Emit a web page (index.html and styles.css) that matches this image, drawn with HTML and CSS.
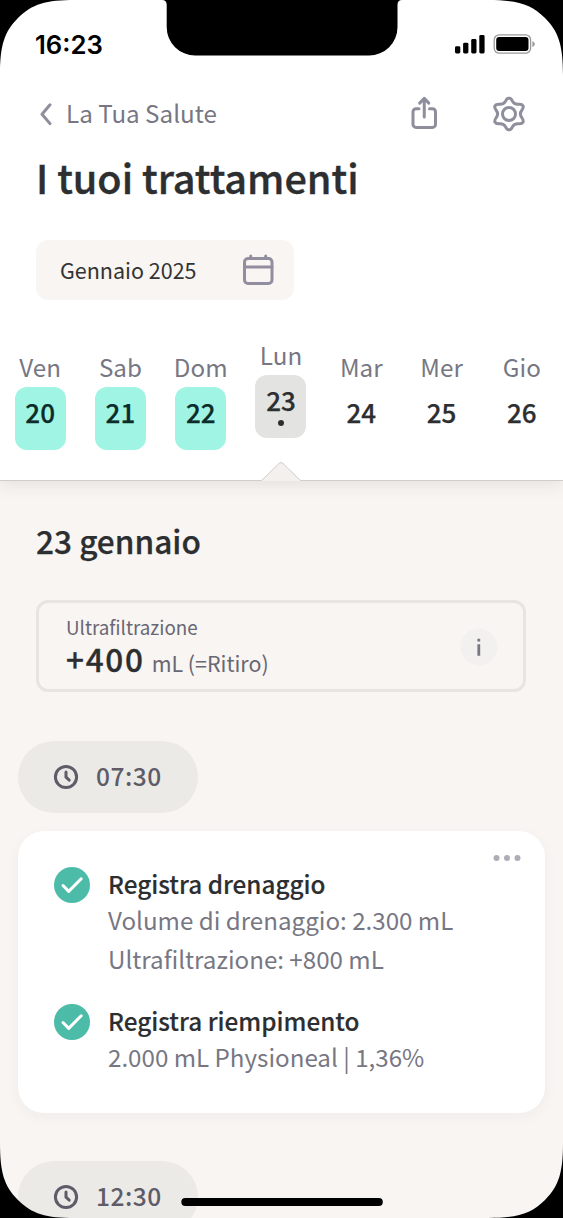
FILE: index.html
```html
<!DOCTYPE html>
<html lang="it">
<head>
<meta charset="utf-8">
<title>I tuoi trattamenti</title>
<link rel="stylesheet" href="styles.css">
</head>
<body>
<div class="phone">
  <header class="top">
    <div class="status">
      <span class="clock">16:23</span>
      <svg class="status-icons" width="82" height="22" viewBox="454 33 82 22">
        <rect x="455" y="46.2" width="5.3" height="7.3" rx="1.4"/>
        <rect x="463.1" y="42.8" width="5.3" height="10.7" rx="1.4"/>
        <rect x="471.2" y="39" width="5.3" height="14.5" rx="1.4"/>
        <rect x="479.3" y="35" width="5.3" height="18.5" rx="1.4"/>
        <rect x="494.2" y="34.8" width="36.4" height="18.4" rx="5" fill="none" stroke="#999" stroke-width="1.3"/>
        <rect x="496.2" y="36.9" width="32.3" height="14.2" rx="3"/>
        <path d="M532.4 41.2c3.2 1 3.2 4.700 0 5.700z" fill="#999"/>
      </svg>
    </div>
    <nav class="nav">
      <svg class="back" width="14" height="24" viewBox="0 0 14 24"><path d="M12 2.800 4 12.200l8 9.400"/></svg>
      <span class="nav-label">La Tua Salute</span>
      <svg class="share" width="28" height="36" viewBox="0 0 28 36"><path d="M8 12.700H5a3 3 0 0 0-3 3v12.700a3 3 0 0 0 3 3h16.500a3 3 0 0 0 3-3V15.700a3 3 0 0 0-3-3h-3M13.250 21V3M8.700 7.100l4.550-4.800 4.550 4.800"/></svg>
      <svg class="gear" width="38" height="38" viewBox="-19 -19 38 38">
        <path d="M-3.400-12.900C-1.700-16.500-.8-15.700 0-15.700S1.700-16.500 3.400-12.900C4.800-10.200 6.200-9.500 9.400-9.700 13.200-10 13.500-9.100 14-8.200S14.800-6.500 12.700-3.500C10.900-1.100 10.900 1.100 12.700 3.500 14.800 6.500 14.500 7.300 14 8.200S13.200 10 9.400 9.700C6.200 9.500 4.800 10.200 3.400 12.900 1.700 16.500.8 15.700 0 15.700S-1.700 16.500-3.400 12.900C-4.800 10.200-6.200 9.500-9.400 9.700-13.200 10-13.500 9.100-14 8.200S-14.800 6.500-12.700 3.500C-10.900 1.100-10.900-1.100-12.700-3.500-14.800-6.500-14.500-7.300-14-8.200S-13.200-10-9.400-9.700C-6.200-9.500-4.800-10.200-3.400-12.900Z"/>
        <circle r="6.500"/>
      </svg>
    </nav>
    <h1 class="title">I tuoi trattamenti</h1>
    <button class="month">
      <span>Gennaio 2025</span>
      <svg width="32" height="32" viewBox="0 0 32 32"><rect x="2.500" y="4.500" width="27.500" height="25" rx="3.500"/><path d="M2.500 13h27.500M8.700 2v2.500M23.700 2v2.500"/></svg>
    </button>
    <div class="days">
      <div class="day done"><span class="name">Ven</span><span class="num">20</span></div>
      <div class="day done"><span class="name">Sab</span><span class="num">21</span></div>
      <div class="day done"><span class="name">Dom</span><span class="num">22</span></div>
      <div class="day current"><span class="name">Lun</span><span class="num">23<i class="dot"></i></span></div>
      <div class="day"><span class="name">Mar</span><span class="num">24</span></div>
      <div class="day"><span class="name">Mer</span><span class="num">25</span></div>
      <div class="day"><span class="name">Gio</span><span class="num">26</span></div>
    </div>
    <svg class="pointer" width="42" height="20" viewBox="0 0 42 20"><path class="fill" d="M1.500 19.500 19 2.500q2-2 4 0L40.500 19.500V20h-39z"/><path class="edge" d="M1.500 19.500 19 2.500q2-2 4 0L40.500 19.500"/></svg>
  </header>
  <main class="content">
    <h2 class="date">23 gennaio</h2>
    <section class="summary">
      <div>
        <div class="summary-label">Ultrafiltrazione</div>
        <div class="summary-value"><strong>+400</strong><span>mL (=Ritiro)</span></div>
      </div>
      <svg class="info" width="38" height="38" viewBox="0 0 38 38"><circle cx="19" cy="19" r="18.500"/><path d="M17.400 10.800h2.800v2.800h-2.800zM17.400 16.200h2.800v11.600h-2.800z"/></svg>
    </section>
    <div class="time">
      <svg width="26" height="26" viewBox="0 0 26 26"><circle cx="13" cy="13" r="10.600"/><path d="M13 7.900v5.200l3.200 3"/></svg><span>07:30</span>
    </div>
    <section class="card">
      <svg class="more" width="28" height="8" viewBox="0 0 28 8"><circle cx="3.500" cy="4" r="3"/><circle cx="14" cy="4" r="3"/><circle cx="24.500" cy="4" r="3"/></svg>
      <article class="item">
        <svg class="check" width="36" height="36" viewBox="0 0 36 36"><circle cx="18" cy="18" r="18"/><path d="m9 18.500 5.700 5.900 12.500-12.600"/></svg>
        <div><h3>Registra drenaggio</h3><p>Volume di drenaggio: 2.300 mL</p><p>Ultrafiltrazione: +800 mL</p></div>
      </article>
      <article class="item">
        <svg class="check" width="36" height="36" viewBox="0 0 36 36"><circle cx="18" cy="18" r="18"/><path d="m9 18.500 5.700 5.900 12.500-12.600"/></svg>
        <div><h3>Registra riempimento</h3><p>2.000 mL Physioneal | 1,36%</p></div>
      </article>
    </section>
    <div class="time">
      <svg width="26" height="26" viewBox="0 0 26 26"><circle cx="13" cy="13" r="10.600"/><path d="M13 7.900v5.200l3.200 3"/></svg><span>12:30</span>
    </div>
  </main>
  <svg class="bezel" width="563" height="1218" viewBox="0 0 563 1218">
    <path d="M0 0H75C46 0 32 4 18 18S0 46 0 75zM563 0H488C517 0 531 4 545 18S563 46 563 75zM0 1218H75C46 1218 32 1214 18 1200S0 1172 0 1143zM563 1218H488C517 1218 531 1214 545 1200S563 1172 563 1143z"/>
    <path d="M162 0Q166.700 0 166.700 5V27A28.500 28.500 0 0 0 195.200 55.500H369A28.500 28.500 0 0 0 397.500 27V5Q397.500 0 402 0z"/>
    <rect x="181.300" y="1198" width="201.500" height="8" rx="4"/>
  </svg>
</div>
</body>
</html>
```
FILE: styles.css
```css
* { box-sizing: border-box; }
body, h1, h2, h3, p { margin: 0; }
body {
  font-family: "Noto Sans CJK SC", "Open Sans", sans-serif;
  color: #2c2e30;
  overflow: hidden;
}
svg { display: block; flex: none; }
.phone {
  position: relative;
  width: 563px;
  height: 1218px;
  overflow: hidden;
  background: #f8f5f2;
}
.top {
  position: relative;
  height: 481px;
  background: #fff;
  border-bottom: 1px solid #cfcecc;
  box-shadow: 0 2px 18px rgba(60, 55, 50, .12);
}
.status {
  display: flex;
  justify-content: space-between;
  height: 80px;
  padding: 33px 27px 0 35px;
}
.clock {
  font: 600 25.7px/24px Inter, sans-serif;
  color: #000;
}
.nav {
  display: flex;
  align-items: center;
  height: 68px;
  padding: 0 35px 0 38px;
}
.nav svg {
  fill: none;
  stroke: #8f8e9c;
  stroke-width: 3;
  stroke-linecap: round;
  stroke-linejoin: round;
}
.nav-label {
  flex: 1;
  margin-left: 14px;
  padding-bottom: 3px;
  font-size: 24.2px;
  line-height: 30px;
  color: #777783;
}
.nav .share { margin-right: 51px; }
.title {
  margin: 4px 0 0 36px;
  font-size: 39.6px;
  font-weight: 500;
  line-height: 49px;
  -webkit-text-stroke: .4px;
}
.month {
  display: flex;
  align-items: center;
  justify-content: space-between;
  width: 258px;
  height: 60px;
  margin: 39px 0 0 36px;
  padding: 0 20px 0 24px;
  border: 0;
  border-radius: 12px;
  background: #f8f5f2;
  color: #333;
  font: 400 21.5px/30px "Noto Sans CJK SC", sans-serif;
}
.month svg { fill: none; stroke: #918f9f; stroke-width: 3; stroke-linecap: round; }
.days {
  display: grid;
  grid-template-columns: repeat(7, 1fr);
  margin: 52px 1px 0 0;
}
.day { display: flex; flex-direction: column; align-items: center; gap: 5px; }
.name { font-size: 24.2px; line-height: 30px; color: #777783; }
.num {
  display: flex;
  flex-direction: column;
  align-items: center;
  width: 51px;
  height: 63px;
  padding-top: 7px;
  border-radius: 12px;
  font-size: 26px;
  font-weight: 500;
  line-height: 36px;
  -webkit-text-stroke: .25px;
}
.done .num { background: #a0f4e3; color: #0c2c29; }
.current { margin-top: -12px; }
.current .num { background: #e3e3e2; }
.dot { width: 6px; height: 6px; margin-top: 2px; border-radius: 50%; background: #2c2e30; }
.pointer { position: absolute; left: 260px; bottom: -1px; }
.pointer .fill { fill: #f3f0ee; }
.pointer .edge { fill: none; stroke: #cfcecc; }
.content { padding: 39px 18px 0; }
.date {
  margin-left: 18px;
  font-size: 31.6px;
  font-weight: 500;
  line-height: 40px;
  -webkit-text-stroke: .25px;
}
.summary {
  display: flex;
  justify-content: space-between;
  align-items: center;
  width: 490px;
  height: 92px;
  margin: 40px 0 0 18px;
  padding: 2px 25px 0 27px;
  border: 3px solid #e8e4e1;
  border-radius: 12px;
}
.summary-label { font-size: 18.8px; line-height: 24px; color: #686773; }
.summary-value { display: flex; align-items: baseline; gap: 7px; height: 40px; line-height: 38px; }
.summary-value strong { font-size: 31.5px; font-weight: 500; letter-spacing: 1.7px; -webkit-text-stroke: .3px; }
.summary-value span { font-size: 21.4px; color: #686773; }
.info { fill: #f3f1ef; }
.info path { fill: #777783; }
.time {
  display: flex;
  align-items: center;
  gap: 17px;
  width: 180px;
  height: 72px;
  margin-top: 49px;
  padding-left: 35px;
  border-radius: 36px;
  background: #ebeae7;
  font-size: 24.5px;
  font-weight: 500;
  line-height: 32px;
  color: #5d5c68;
}
.time span { padding-bottom: 2px; letter-spacing: .5px; }
.time svg { fill: none; stroke: #5d5c68; stroke-width: 3; stroke-linecap: round; }
.card {
  position: relative;
  width: 527px;
  height: 282px;
  margin-top: 18px;
  padding: 33px 36px 0;
  border-radius: 26px;
  background: #fff;
  box-shadow: 0 4px 14px rgba(60, 50, 40, .045);
}
.card + .time { margin-top: 48px; }
.more { position: absolute; top: 23px; right: 24px; fill: #adadb7; }
.item { display: flex; gap: 18px; }
.item + .item { margin-top: 23px; }
.item h3 {
  height: 36px;
  padding-top: 2px;
  font-size: 24.3px;
  font-weight: 500;
  line-height: 36px;
  -webkit-text-stroke: .15px;
}
.item p { font-size: 24.15px; line-height: 39px; color: #777783; }
.check { margin-top: 3px; fill: #4cbba7; }
.check path { fill: none; stroke: #fff; stroke-width: 3; stroke-linecap: round; stroke-linejoin: round; }
.bezel { position: absolute; inset: 0; }
```
